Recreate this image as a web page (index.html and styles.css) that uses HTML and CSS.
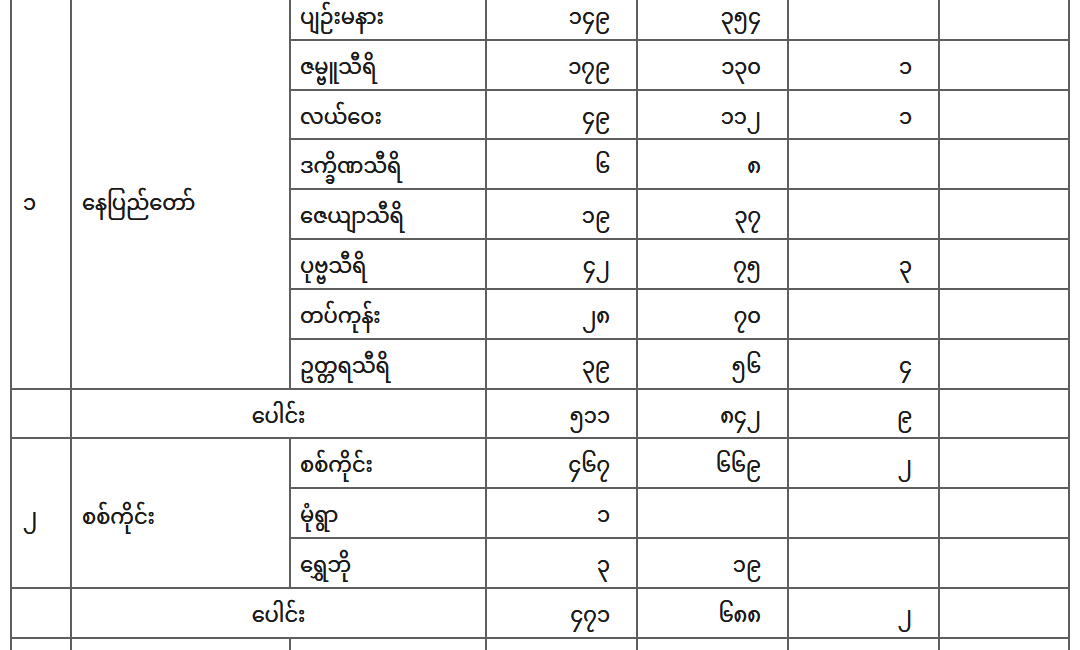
FILE: index.html
```html
<!DOCTYPE html>
<html lang="my">
<head>
<meta charset="utf-8">
<title>ပေါင်း</title>
<link rel="stylesheet" href="styles.css">
</head>
<body>
<div class="page">
<table class="tbl">
<colgroup>
<col class="c1"><col class="c2"><col class="c3"><col class="c4"><col class="c5"><col class="c6"><col class="c7">
</colgroup>
<tbody>
<tr class="first"><td class="no g1" rowspan="8">၁</td><td class="dist g1" rowspan="8">နေပြည်တော်</td><td class="tw">ပျဉ်းမနား</td><td class="num">၁၄၉</td><td class="num">၃၅၄</td><td class="num"></td><td></td></tr>
<tr><td class="tw">ဇမ္ဗူသီရိ</td><td class="num">၁၇၉</td><td class="num">၁၃၀</td><td class="num">၁</td><td></td></tr>
<tr><td class="tw">လယ်ဝေး</td><td class="num">၄၉</td><td class="num">၁၁၂</td><td class="num">၁</td><td></td></tr>
<tr><td class="tw">ဒက္ခိဏသီရိ</td><td class="num">၆</td><td class="num">၈</td><td class="num"></td><td></td></tr>
<tr><td class="tw">ဇေယျာသီရိ</td><td class="num">၁၉</td><td class="num">၃၇</td><td class="num"></td><td></td></tr>
<tr><td class="tw">ပုဗ္ဗသီရိ</td><td class="num">၄၂</td><td class="num">၇၅</td><td class="num">၃</td><td></td></tr>
<tr><td class="tw">တပ်ကုန်း</td><td class="num">၂၈</td><td class="num">၇၀</td><td class="num"></td><td></td></tr>
<tr><td class="tw">ဥတ္တရသီရိ</td><td class="num">၃၉</td><td class="num">၅၆</td><td class="num">၄</td><td></td></tr>
<tr><td></td><td class="sum" colspan="2">ပေါင်း</td><td class="num">၅၁၁</td><td class="num">၈၄၂</td><td class="num">၉</td><td></td></tr>
<tr><td class="no" rowspan="3">၂</td><td class="dist" rowspan="3">စစ်ကိုင်း</td><td class="tw">စစ်ကိုင်း</td><td class="num">၄၆၇</td><td class="num">၆၆၉</td><td class="num">၂</td><td></td></tr>
<tr><td class="tw">မုံရွာ</td><td class="num">၁</td><td class="num"></td><td class="num"></td><td></td></tr>
<tr><td class="tw">ရွှေဘို</td><td class="num">၃</td><td class="num">၁၉</td><td class="num"></td><td></td></tr>
<tr><td></td><td class="sum" colspan="2">ပေါင်း</td><td class="num">၄၇၁</td><td class="num">၆၈၈</td><td class="num">၂</td><td></td></tr>
<tr class="last"><td class="no"></td><td class="dist"></td><td class="tw"></td><td class="num"></td><td class="num"></td><td class="num"></td><td></td></tr>
</tbody>
</table>
</div>
</body>
</html>
```

FILE: styles.css
```css
html, body {
  margin: 0;
  padding: 0;
  background: #ffffff;
}
body {
  width: 1080px;
  height: 650px;
  overflow: hidden;
}
.page {
  padding-left: 10px;
}
.tbl {
  border-collapse: collapse;
  table-layout: fixed;
  width: 1060px;
  font-family: "Noto Sans Myanmar", "Padauk", "Myanmar Text", "Noto Sans", "DejaVu Sans", sans-serif;
  font-size: 21px;
  line-height: 28px;
  color: #1a1a1a;
}
.c1 { width: 60px; }
.c2 { width: 219px; }
.c3 { width: 196px; }
.c4 { width: 151px; }
.c5 { width: 151px; }
.c6 { width: 151px; }
.c7 { width: 130px; }
.tbl tr {
  height: 49.84px;
}
.tbl tr.first {
  height: 39.84px;
}
.tbl td {
  border: 2px solid #5e5e5e;
  padding: 8px 0 0 0;
  vertical-align: middle;
  white-space: nowrap;
  text-shadow: 0 0 0.4px #1a1a1a;
}
.tbl tr.first td {
  border-top-style: hidden;
  padding-top: 0;
}
.tbl td.no {
  padding-left: 11px;
  padding-top: 12px;
}
.tbl td.dist {
  padding-left: 10px;
  padding-top: 12px;
}
.tbl tr.first td.g1 {
  padding-top: 22px;
}
.tbl td.tw {
  padding-left: 9px;
}
.tbl td.num {
  text-align: right;
  padding-right: 26px;
}
.tbl td.sum {
  text-align: center;
}
```
